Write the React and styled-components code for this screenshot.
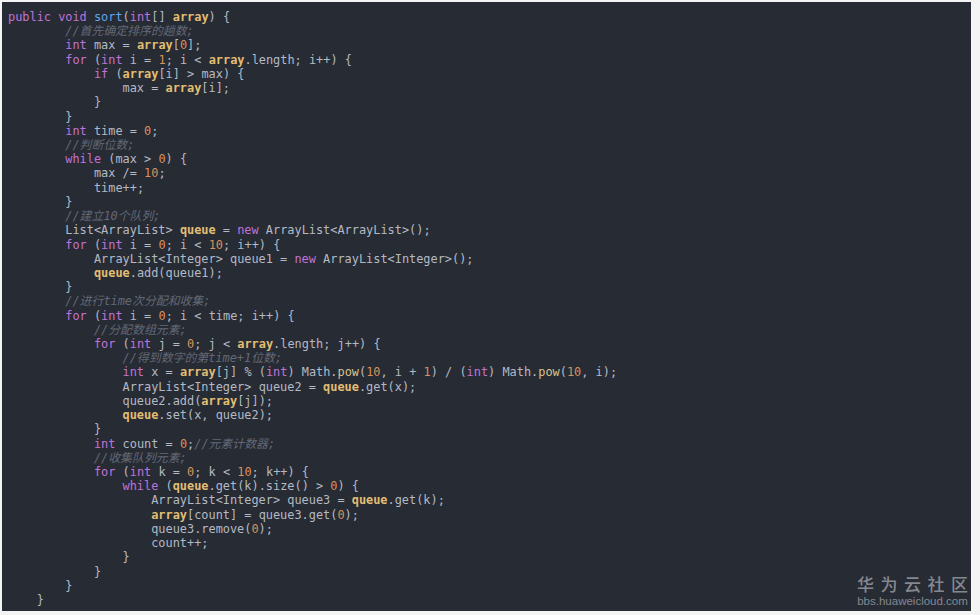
import React from "react";
import styled, { createGlobalStyle } from "styled-components";

const Global = createGlobalStyle`
  html, body {
    margin: 0;
    padding: 0;
    background: #f4f4f4;
  }
`;

const code = `public void sort(int[] array) {
        //首先确定排序的趟数;
        int max = array[0];
        for (int i = 1; i < array.length; i++) {
            if (array[i] > max) {
                max = array[i];
            }
        }
        int time = 0;
        //判断位数;
        while (max > 0) {
            max /= 10;
            time++;
        }
        //建立10个队列;
        List<ArrayList> queue = new ArrayList<ArrayList>();
        for (int i = 0; i < 10; i++) {
            ArrayList<Integer> queue1 = new ArrayList<Integer>();
            queue.add(queue1);
        }
        //进行time次分配和收集;
        for (int i = 0; i < time; i++) {
            //分配数组元素;
            for (int j = 0; j < array.length; j++) {
                //得到数字的第time+1位数;
                int x = array[j] % (int) Math.pow(10, i + 1) / (int) Math.pow(10, i);
                ArrayList<Integer> queue2 = queue.get(x);
                queue2.add(array[j]);
                queue.set(x, queue2);
            }
            int count = 0;//元素计数器;
            //收集队列元素;
            for (int k = 0; k < 10; k++) {
                while (queue.get(k).size() > 0) {
                    ArrayList<Integer> queue3 = queue.get(k);
                    array[count] = queue3.get(0);
                    queue3.remove(0);
                    count++;
                }
            }
        }
    }`;

const keywords = ["public", "void", "int", "for", "if", "while", "new"];
const fields = ["array", "queue"];

const kindOf = (word) => {
  if (keywords.includes(word)) return "keyword";
  if (fields.includes(word)) return "field";
  if (word === "sort") return "method";
  if (word === "pow") return "call";
  if (/^\d+$/.test(word)) return "number";
  return "plain";
};

const colors = {
  keyword: "#c073d6",
  field: "#e2be73",
  method: "#62a6e8",
  call: "#d9c48e",
  number: "#d8915a",
  plain: "#b4bac4",
  comment: "#626875",
};

const Page = styled.div`
  padding: 2px 0 4px 2px;
`;

const Panel = styled.div`
  position: relative;
  width: 969px;
  height: 609px;
  box-sizing: border-box;
  padding: 8px 0 0 6px;
  background: #272b34;
  overflow: hidden;
`;

const Pre = styled.pre`
  margin: 0;
  font-family: "DejaVu Sans Mono", "Noto Sans CJK SC", monospace;
  font-size: 11.9px;
  line-height: 14.22px;
  color: ${colors.plain};
`;

const Line = styled.div`
  white-space: pre;
  height: 14.22px;
`;

const Tok = styled.span`
  color: ${(p) => colors[p.$kind]};
  font-weight: ${(p) => (p.$kind === "field" ? "bold" : "normal")};
  font-style: ${(p) => (p.$kind === "comment" ? "italic" : "normal")};
`;

const Mark = styled.div`
  position: absolute;
  right: 3px;
  bottom: 3px;
  display: flex;
  flex-direction: column;
  align-items: center;
  color: rgba(215, 218, 224, 0.55);
  font-family: "Noto Sans CJK SC", sans-serif;
`;

const MarkTitle = styled.div`
  display: flex;
  gap: 6.5px;
  font-size: 17px;
  line-height: 20px;
  font-weight: 500;
`;

const MarkUrl = styled.div`
  font-family: "Liberation Sans", sans-serif;
  font-size: 11.5px;
  line-height: 14px;
`;

const CodeLine = ({ text }) => {
  const idx = text.indexOf("//");
  const body = idx >= 0 ? text.slice(0, idx) : text;
  const comment = idx >= 0 ? text.slice(idx) : "";
  const parts = body.match(/(\s+|\w+|[^\w\s])/g) || [];
  return (
    <Line>
      {parts.map((p, i) => (
        <Tok key={i} $kind={kindOf(p)}>
          {p}
        </Tok>
      ))}
      {comment && <Tok $kind="comment">{comment}</Tok>}
    </Line>
  );
};

export default function App() {
  return (
    <Page>
      <Global />
      <Panel>
        <Pre>
          {code.split("\n").map((l, i) => (
            <CodeLine key={i} text={l} />
          ))}
        </Pre>
        <Mark>
          <MarkTitle>
            {"华为云社区".split("").map((c) => (
              <span key={c}>{c}</span>
            ))}
          </MarkTitle>
          <MarkUrl>bbs.huaweicloud.com</MarkUrl>
        </Mark>
      </Panel>
    </Page>
  );
}
